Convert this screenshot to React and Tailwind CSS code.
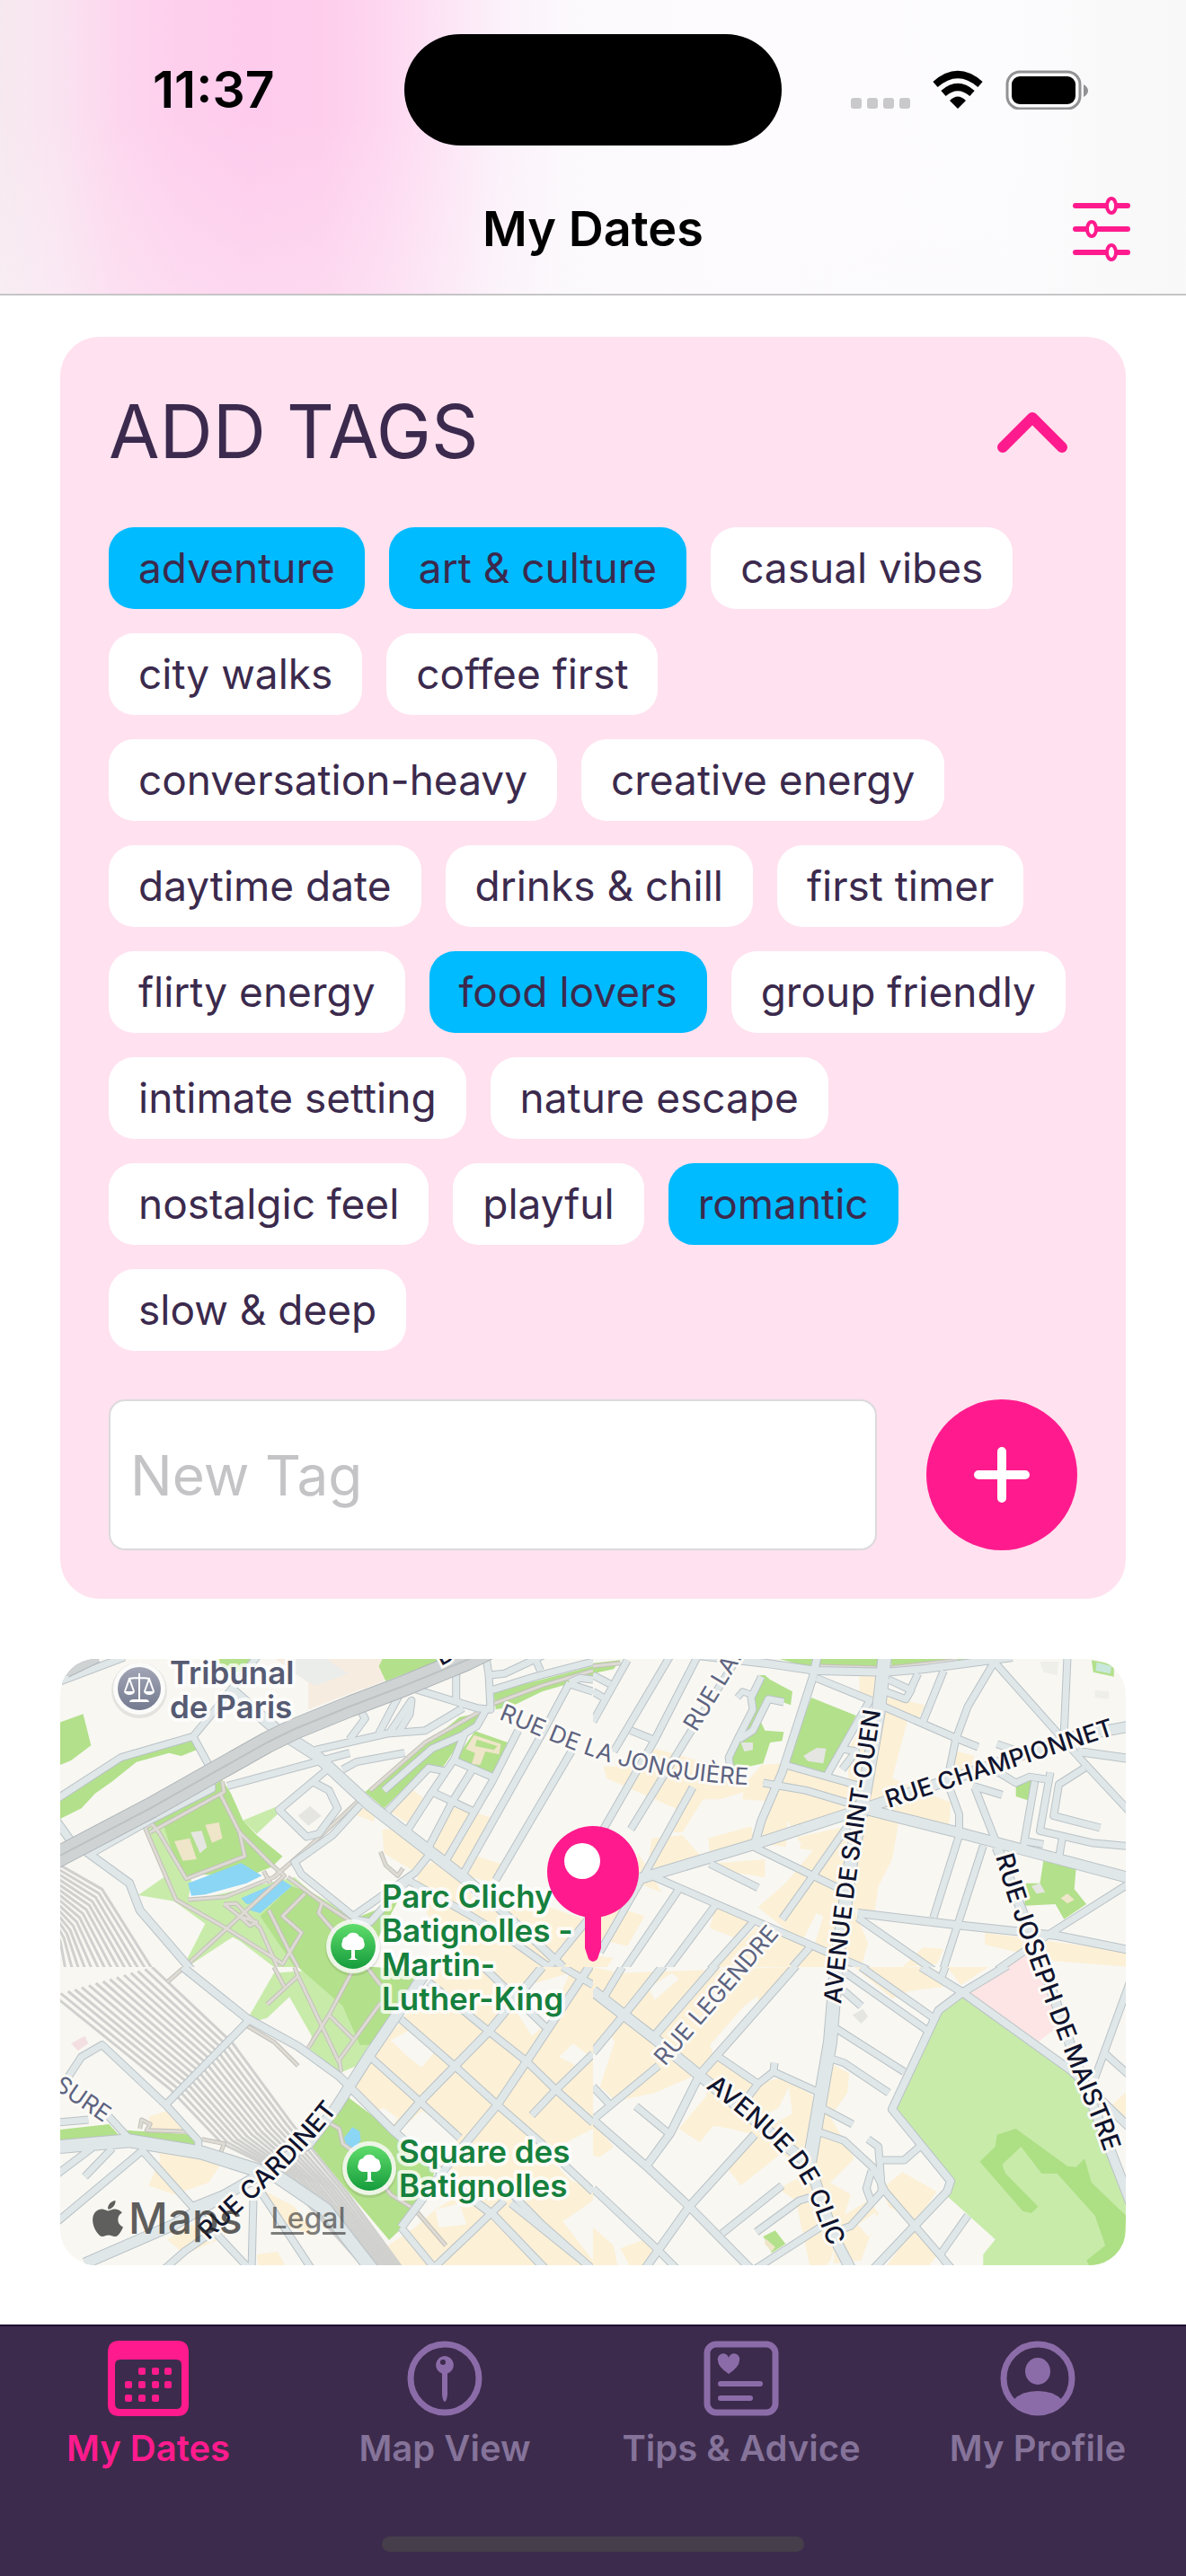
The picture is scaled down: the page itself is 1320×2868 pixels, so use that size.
import { useState } from "react";
import { FaApple } from "react-icons/fa";

const allTags = [
  "adventure",
  "art & culture",
  "casual vibes",
  "city walks",
  "coffee first",
  "conversation-heavy",
  "creative energy",
  "daytime date",
  "drinks & chill",
  "first timer",
  "flirty energy",
  "food lovers",
  "group friendly",
  "intimate setting",
  "nature escape",
  "nostalgic feel",
  "playful",
  "romantic",
  "slow & deep",
];

const YELLOW = "#fcf0d6";
const GREEN = "#b3e08b";
const LIGHT_GREEN = "#c8ebaa";
const WATER = "#8bd5f5";
const PAPER = "#f8f7f2";
const PINK = "#fce5e4";
const SAND = "#efe5c9";
const BUILDING = "#e5e6e2";

// The map is cut into four tiles, each with its own 1568x1050 grid.
// areas: [fill, points], roads: [width, points]
const tiles = [
  {
    x: -7,
    y: -7,
    areas: [
      ["#f6ece0", "620,0 970,0 960,95 830,150 740,190 740,100"],
      ["#ebedeb", "690,0 790,20 855,70 760,110 700,70"],
      [GREEN, "0,240 85,205 108,310 50,360 18,375 0,380"],
      [GREEN, "0,500 180,360 380,290 410,295 415,325 370,345 335,335 240,365 170,430 120,470 80,520 0,565"],
      [GREEN, "465,0 600,0 555,60 500,70"],
      [GREEN, "945,45 965,0 1180,0 965,95"],
      [GREEN, "1278,130 1400,95 1568,45 1568,80 1420,130 1330,180 1285,190"],
      [GREEN, "905,465 1000,380 1080,310 1180,215 1250,198 1230,250 1180,300 1130,385 1090,380 1040,430 960,520"],
      [GREEN, "1225,262 1320,300 1275,408 1168,355"],
      [SAND, "1222,275 1300,305 1295,340 1255,330 1240,375 1215,372 1225,335 1198,322"],
      [GREEN, "1230,290 1290,312 1280,325 1225,312"],
      [LIGHT_GREEN, "262,585 330,560 400,760 390,830 500,830 620,880 720,1050 690,1050 520,950 400,1040 380,1040 440,905 350,830 245,810 320,750"],
      [LIGHT_GREEN, "550,560 645,515 650,540 590,605"],
      [LIGHT_GREEN, "390,830 700,750 750,800 900,900 800,1050 640,1050"],
      [GREEN, "262,580 490,425 515,470 550,560 590,610 665,680 635,715 560,750 420,740 385,760 340,650 320,580"],
      [GREEN, "600,880 690,780 745,800 870,890 1000,830 940,960 870,1050 700,1050"],
      [SAND, "350,630 395,620 415,690 375,695"],
      [BUILDING, "398,600 430,595 445,650 425,670"],
      [SAND, "440,575 480,567 490,620 460,635"],
      [BUILDING, "710,545 745,512 778,545 740,578"],
      [WATER, "390,770 545,703 605,745 560,770 440,808 400,812"],
      [WATER, "545,820 665,760 692,780 600,870 570,860 590,835 560,840"],
      [YELLOW, "975,530 1040,455 1075,485 1030,570"],
      [YELLOW, "875,540 905,508 938,530 930,565"],
      [YELLOW, "955,590 1010,588 1090,680 1040,725 960,670"],
      [YELLOW, "1160,515 1210,530 1140,690 1090,650"],
      [YELLOW, "1215,530 1270,550 1190,740 1150,700"],
      [YELLOW, "1230,680 1300,705 1270,765 1195,745"],
      [YELLOW, "1060,730 1110,690 1190,755 1230,840 1440,850 1568,900 1568,1050 1200,1050 1100,900 1050,800"],
    ],
    rails: [
      [[18, 710], [140, 790], [285, 1055]],
      [[0, 930], [10, 980], [15, 1060]],
    ],
    paths: [
      "300,590 385,755 555,680 540,600 485,475",
      "280,600 495,465 490,430",
      "265,585 355,825 500,920 640,1020 665,1040 720,935 665,880 730,805",
      "265,585 285,572 305,600",
      "390,1040 670,745 635,710 540,600",
      "610,730 630,770",
      "495,840 540,880 590,900 570,912 540,880",
      "495,840 530,838 600,920 650,1050",
      "680,750 780,835 860,895",
      "780,835 770,870 830,950",
      "625,860 690,1010 710,1050",
      "390,825 500,815 640,750 740,650 890,490",
      "920,460 1080,300 1280,170 1420,110 1568,60",
      "950,665 965,710 1000,745 1015,720",
    ],
    roads: [
      [8, "20,95 205,15"],
      [8, "110,670 280,560 460,455 455,385 405,280 195,350 0,495"],
      [8, "405,280 470,190 600,0"],
      [8, "505,445 860,335"],
      [8, "840,390 880,365 1020,335"],
      [8, "760,325 970,270 1080,260 1190,185"],
      [8, "860,290 905,220 895,200"],
      [8, "945,270 1005,140"],
      [8, "975,270 1040,160 1035,205 1000,270"],
      [8, "1045,120 1230,185 1270,190 1265,75 1255,0"],
      [8, "1170,165 1170,30"],
      [8, "1270,75 1310,70 1440,0"],
      [8, "1400,20 1415,60"],
      [8, "1275,125 1400,80 1568,30"],
      [8, "1255,195 1230,245 1195,270 1165,355 1100,465 1030,590"],
      [8, "960,460 1100,320 1190,275"],
      [8, "970,530 1090,385 1135,395"],
      [8, "1165,360 1275,415"],
      [8, "1215,395 1160,495 1090,650"],
      [8, "1100,465 1220,530"],
      [8, "1350,260 1275,430 1140,695"],
      [8, "1500,100 1430,250 1190,740"],
      [8, "1510,320 1285,760"],
      [8, "1500,100 1530,85 1568,90"],
      [8, "1500,105 1568,130"],
      [8, "750,430 800,460 825,520 770,605 735,615 655,525 790,395"],
      [8, "890,510 810,610 700,700 720,740 870,880 1050,735 1095,670"],
      [8, "870,890 920,900 1030,760 1200,870 1330,960 1440,1050"],
      [9, "0,550 50,630 100,670 220,770 250,860 400,1060"],
      [9, "1240,800 1360,920 1480,1050"],
      [8, "1568,870 1440,1050"],
      [13, "520,130 650,260 760,340 920,510 1010,590 1190,750 1250,810"],
    ],
    highways: ["-10,695 280,520 450,410 620,300 700,255 860,180 1020,110 1200,25 1270,-15", "30,50 120,0"],
  },
  {
    x: 593,
    y: -7,
    areas: [
      [GREEN, "485,75 500,75 515,90 580,130 575,175 515,150 480,210 500,260 555,265 550,295 515,300 495,370 405,392 400,360 430,290 470,190 465,150"],
      [GREEN, "635,150 765,210 680,405 565,365"],
      [GREEN, "480,0 840,0 845,55 700,55 600,40"],
      [GREEN, "865,0 1150,0 1000,50 870,55"],
      [GREEN, "1230,440 1275,425 1270,495 1230,480"],
      [GREEN, "1310,695 1405,720 1400,790 1435,840 1370,890 1345,840 1255,845 1260,770 1300,770"],
      [GREEN, "1450,25 1515,40 1515,80 1455,65"],
      ["#c9e8dc", "1465,32 1508,45 1505,70 1462,60"],
      [GREEN, "0,35 80,25 60,55 0,70"],
      [BUILDING, "612,345 650,318 678,320 670,370 625,362"],
      [BUILDING, "430,300 465,300 465,325 440,330"],
      [BUILDING, "1275,780 1300,770 1315,800 1290,805"],
      [SAND, "1360,820 1380,805 1400,825 1380,838"],
      ["#efefea", "1300,30 1355,30 1350,75 1310,65"],
      ["#efefea", "1460,125 1500,130 1500,155 1460,150"],
      [YELLOW, "180,320 350,375 350,400 480,450 370,490 320,490 260,600 235,600 240,520 40,420 30,380 130,380"],
      [YELLOW, "490,375 560,370 750,450 745,515 435,490 440,440"],
      [YELLOW, "515,460 740,520 490,620"],
      [YELLOW, "775,75 830,80 825,160 775,145"],
      [YELLOW, "850,145 965,175 945,225 860,190"],
      [YELLOW, "815,180 915,225 870,420 1040,500 1035,585 850,530 890,560 870,690 830,780 820,860 760,860 740,330"],
      [YELLOW, "1060,330 1110,345 1090,400 1020,420"],
      [YELLOW, "740,580 760,860 800,970 780,1050 560,1050 620,980 480,850 560,770 640,660 500,640"],
      [PAPER, "565,560 605,640 590,700 560,670"],
      [PAPER, "650,870 670,880 640,990 610,960"],
      [YELLOW, "335,620 460,580 470,630 340,670"],
      [YELLOW, "170,620 260,610 330,700 160,720"],
      [YELLOW, "340,705 500,690 500,750 380,730"],
      [YELLOW, "130,670 170,740 200,800 130,770"],
      [YELLOW, "40,840 150,880 100,980 0,950 0,850"],
      [YELLOW, "355,850 480,900 430,960 340,920"],
      [YELLOW, "360,1050 480,910 620,980 560,1050"],
      [YELLOW, "0,1010 60,1020 40,1050 0,1050"],
      [YELLOW, "960,985 1020,990 1000,1040 900,1050"],
      [YELLOW, "1140,935 1568,1000 1568,1050 1340,1030 1140,975"],
      [PINK, "1190,1050 1270,995 1300,1010 1330,1050"],
    ],
    paths: ["660,45 850,52 1060,25", "0,45 80,35"],
    roads: [
      [9, "310,10 500,35 650,60 850,65 960,55 1220,15"],
      [8, "100,25 0,230"],
      [8, "225,10 60,330"],
      [8, "305,10 180,290 100,450 30,590"],
      [8, "110,260 175,290"],
      [8, "0,75 50,105"],
      [8, "0,130 30,150"],
      [8, "430,0 270,290 110,590"],
      [8, "290,450 150,740 20,1000"],
      [8, "250,790 90,1060"],
      [8, "355,845 215,1060"],
      [8, "465,900 340,1060"],
      [8, "630,985 580,1050"],
      [8, "180,750 460,890 620,970 800,1060"],
      [8, "340,705 480,785"],
      [8, "470,650 640,745 730,795"],
      [8, "740,580 640,745 550,890"],
      [8, "495,435 620,460 780,515"],
      [8, "560,375 790,450"],
      [9, "655,0 640,80 550,400 490,560 470,640"],
      [8, "650,85 810,160"],
      [8, "805,160 680,410"],
      [8, "720,320 765,330 725,390"],
      [8, "490,80 460,150 465,190 420,290 395,350 400,390"],
      [8, "425,290 465,260 510,155 555,165"],
      [7, "420,150 435,130 460,140"],
      [8, "845,180 1055,285 1120,315"],
      [8, "860,90 925,125 910,155 850,130"],
      [8, "945,70 925,120"],
      [8, "1020,60 960,230"],
      [8, "1165,35 1090,180 1055,290 1030,430 1065,540 1065,610 990,885"],
      [8, "1155,15 1360,280 1430,370 1568,540"],
      [8, "1380,10 1370,270 1360,280"],
      [8, "1175,305 1250,335"],
      [9, "1410,330 1568,355"],
      [8, "1430,385 1355,440 1340,545 1475,585"],
      [8, "1180,400 1230,435 1270,415 1330,425"],
      [8, "1330,400 1300,595 1450,635 1568,648"],
      [8, "1285,430 1250,660"],
      [8, "1365,620 1355,685"],
      [8, "1260,630 1310,640"],
      [8, "1105,445 1190,475"],
      [8, "1110,450 1175,640"],
      [9, "770,870 1060,910 1350,945 1568,995"],
      [8, "770,885 990,1060"],
      [8, "1135,645 1018,1060"],
      [8, "1568,765 1320,945 1175,1060"],
      [11, "1175,650 1250,870 1320,1060"],
      [12, "135,755 470,640 790,520 1100,400 1400,280 1568,245"],
      [12, "800,525 1060,600 1290,670 1568,755"],
      [15, "850,0 830,200 800,400 780,530 750,700 730,870 705,1060"],
    ],
  },
  {
    x: -7,
    y: 343,
    areas: [
      [YELLOW, "925,300 1010,180 1130,0 1568,0 1568,1050 990,1050 960,940 1050,870 1110,810 1180,760 1000,560 870,410"],
      [PAPER, "980,245 1050,200 1110,280 1070,335 1030,300"],
      [PAPER, "1470,300 1510,255 1550,290 1520,330"],
      [PAPER, "990,560 1070,480 1180,560 1150,640 1060,650"],
      [PAPER, "940,480 960,470 1000,505 985,530"],
      [PAPER, "1330,120 1380,60 1500,20 1440,180 1390,230"],
      [PAPER, "1110,810 1180,790 1200,860 1120,870"],
      [PAPER, "1430,620 1568,540 1568,740 1500,710"],
      [PAPER, "1480,850 1568,780 1568,980"],
      [YELLOW, "275,500 330,480 400,580 490,650 450,720 350,760 275,730 310,640"],
      [YELLOW, "330,910 400,860 500,900 380,960"],
      [YELLOW, "600,740 700,800 760,900 650,850"],
      [YELLOW, "590,960 650,950 700,1050 600,1050"],
      [LIGHT_GREEN, "640,20 870,0 950,60 990,120 880,330 830,355 740,270 750,230 685,100 620,170 590,180 570,160"],
      [GREEN, "710,0 930,0 1060,10 1010,120 940,260 890,260 840,130"],
      [GREEN, "850,430 1000,560 1110,660 1100,720 1005,880 975,912 750,605 800,520"],
      [GREEN, "0,545 160,525 200,575 0,583"],
      [GREEN, "210,545 410,560 410,600 215,570"],
      ["#f3dfe2", "50,255 90,230 100,255 70,280"],
      [WATER, "868,535 890,550 892,580 875,605 850,595 844,570"],
    ],
    rails: [
      [[285, 0], [520, 255], [690, 520], [850, 750], [1010, 1000]],
      [[0, 95], [340, 410], [490, 590], [650, 680], [900, 1000]],
    ],
    paths: [
      "640,0 670,65",
      "700,0 710,30 620,125",
      "710,30 830,320",
      "865,20 800,160 740,270",
      "800,160 870,240",
      "950,120 830,310 835,350",
      "910,0 950,60",
      "800,520 830,540 840,590 900,640 980,760 1050,810 1140,930",
      "560,195 640,250 710,330",
      "250,540 255,510 280,525 270,545 390,550",
      "430,575 495,590 485,620",
      "330,50 380,0",
    ],
    roads: [
      [9, "375,0 560,170 710,265 830,365 990,550 1110,670 1210,770 1280,830 1430,1010"],
      [8, "565,180 325,460"],
      [8, "0,440 80,300 140,260 325,460 420,580 420,610"],
      [8, "220,575 160,500"],
      [8, "0,520 100,510"],
      [8, "0,700 110,605"],
      [8, "90,700 170,605"],
      [8, "0,860 260,610"],
      [8, "255,610 480,900 570,1010"],
      [8, "590,730 750,1010"],
      [8, "575,720 400,800"],
      [8, "580,780 575,1010"],
      [8, "480,870 380,950 320,1010"],
      [9, "1420,0 1265,215 1065,450 990,550"],
      [9, "1568,-20 1375,315 1290,460 1160,640 1010,870"],
      [8, "1568,290 1460,410 1390,495"],
      [8, "1310,780 1210,890 1100,1010"],
      [8, "920,300 1065,450 1180,570"],
      [8, "1010,175 1165,330 1290,460 1420,590 1568,750"],
      [8, "1090,50 1265,215 1375,315 1460,410 1568,520"],
      [8, "1250,0 1430,200"],
      [8, "1480,0 1568,60"],
      [8, "1010,870 1110,1010"],
      [8, "1330,790 1568,1010"],
      [8, "1300,720 1420,860 1568,1010"],
      [12, "1080,20 920,290 820,470 740,590 590,700 350,860 90,990"],
      [15, "0,602 220,580 430,620 650,700 790,810 925,1010"],
    ],
  },
  {
    x: 593,
    y: 343,
    areas: [
      [YELLOW, "80,20 580,0 320,350 180,420 60,450 40,390 120,320 50,230 100,150 0,90 0,0"],
      [YELLOW, "0,70 90,160 0,285"],
      [YELLOW, "90,160 190,240 150,330 60,440 20,400 60,260"],
      [PAPER, "160,70 230,20 250,40 180,110"],
      [PAPER, "440,130 480,95 480,140 350,290 340,260"],
      [YELLOW, "320,340 360,310 470,390 550,370 640,430 640,620 590,660 550,620 430,730 390,670 470,560 400,540 350,530 310,585 250,540 330,430"],
      [PAPER, "570,400 580,490 500,540 490,500 540,470"],
      [YELLOW, "690,320 745,355 740,420 690,500 760,640 690,720 750,760 690,980 640,1050 590,780 540,740 620,690 650,560"],
      [YELLOW, "760,0 980,0 1060,60 920,80 870,105"],
      [YELLOW, "1030,0 1150,0 1070,60"],
      [YELLOW, "840,740 900,685 1000,750 940,850 860,800"],
      [YELLOW, "820,1050 930,880 1010,950 940,1050"],
      [YELLOW, "700,850 800,780 830,820 780,980 700,990"],
      [PAPER, "770,860 820,820 835,860 800,900"],
      [YELLOW, "0,520 60,600 20,635 0,630"],
      [YELLOW, "80,940 150,910 180,950 150,1050 130,1050"],
      [YELLOW, "0,870 60,930 80,1050 0,1050"],
      [YELLOW, "1510,460 1568,400 1568,520"],
      [PINK, "1090,80 1200,0 1310,0 1350,200 1295,250"],
      [LIGHT_GREEN, "1075,100 1400,365 1568,750 1568,1050 1135,1050 1135,960 1170,910 1030,765 1045,720 880,470 1000,150"],
      ["#addf84", "1125,650 1170,600 1175,560 1230,540 1380,665 1405,668 1430,640 1450,720 1550,830 1545,930 1470,1050 1435,980 1490,930 1460,830 1350,690 1305,690 1245,600 1190,660 1200,690 1295,800 1275,822 1250,815"],
      [GREEN, "495,900 530,880 560,925 520,955"],
      [SAND, "500,905 530,935 520,950 500,925"],
      [BUILDING, "755,160 785,140 800,165 780,190"],
    ],
    paths: [],
    roads: [
      [8, "85,0 35,95"],
      [9, "205,-5 90,160 0,285"],
      [9, "360,-10 175,235"],
      [9, "590,-5 310,360 225,555 155,665"],
      [8, "190,330 0,510"],
      [8, "0,400 50,460"],
      [9, "0,510 155,665 280,800 460,1010"],
      [8, "125,465 225,560"],
      [8, "0,740 185,940 245,1010"],
      [9, "470,560 280,800 150,1010"],
      [8, "365,300 480,390 420,480"],
      [8, "480,390 525,350 650,415"],
      [8, "525,350 528,320"],
      [8, "550,730 375,890"],
      [8, "630,770 600,780 475,885"],
      [8, "660,870 470,1010"],
      [8, "655,550 730,580 815,670 850,750 1045,1010"],
      [8, "810,680 795,740 810,785"],
      [8, "800,575 830,600 835,670 840,750 750,865 690,890"],
      [8, "840,645 905,645 950,600"],
      [8, "700,200 905,350"],
      [8, "690,305 730,320 860,420"],
      [8, "665,470 755,525"],
      [8, "730,15 970,210"],
      [8, "780,0 990,170"],
      [8, "730,80 780,130"],
      [9, "955,0 1075,85 1390,345 1568,545"],
      [9, "1205,-5 1075,85 1005,145 870,475 1040,715 1030,750 815,1010"],
      [8, "1090,830 1010,960 1040,1010"],
      [8, "1015,30 1025,0"],
      [8, "1568,30 1460,370"],
      [8, "1490,290 1568,370"],
      [11, "1310,-5 1400,300 1460,480 1568,800"],
      [12, "0,80 90,160 180,240 350,400 630,660 700,900 750,1010"],
      [15, "708,0 690,250 630,650"],
    ],
  },
];

const streets = [
  { name: "RUE CHAMPIONNET", d: "M922 166 L1190 79", style: "fill-[#10142e] text-[27px] font-medium" },
  { name: "AVENUE DE SAINT-OUEN", d: "M869 384 Q880 270 916 40", style: "fill-[#10142e] text-[27px] font-medium" },
  { name: "RUE DE LA JONQUIÈRE", d: "M488 67 C560 95 640 145 830 141", style: "fill-[#5d6380] text-[26px]" },
  { name: "RUE LAN", d: "M708 82 L770 -20", style: "fill-[#5d6380] text-[26px]" },
  { name: "RUE LEGENDRE", d: "M673 454 L840 261", style: "fill-[#5d6380] text-[26px]" },
  { name: "AVENUE DE CLIC", d: "M718 477 C780 525 820 560 835 600 S860 665 890 740", style: "fill-[#10142e] text-[28px] font-medium" },
  { name: "RUE JOSEPH DE MAISTRE", d: "M1041 220 C1060 290 1110 420 1135 480 S1170 560 1185 660", style: "fill-[#10142e] text-[28px] font-medium" },
  { name: "RUE CARDINET", d: "M165 648 C230 585 285 545 345 450", style: "fill-[#10142e] text-[28px] font-medium" },
  { name: "SURE", d: "M-8 478 L90 545", style: "fill-[#5d6380] text-[26px]" },
];

// spread a set of tracks between the two outer ones
const railTracks = ([upper, lower]) =>
  Array.from({ length: 15 }, (_, i) =>
    upper
      .map(([x, y], p) => {
        const t = i / 14;
        return `${Math.round(x + (lower[p][0] - x) * t)},${Math.round(y + (lower[p][1] - y) * t)}`;
      })
      .join(" "),
  );

const Line = ({ points, color, width }) => (
  <polyline
    points={points}
    fill="none"
    stroke={color}
    strokeWidth={width}
    strokeLinejoin="round"
    vectorEffect="non-scaling-stroke"
  />
);

const MapTile = ({ tile }) => (
  <svg x={tile.x} y={tile.y} width="600" height="350" viewBox="0 0 1568 1050" preserveAspectRatio="none">
    {tile.areas.map(([fill, points]) => (
      <polygon key={points} points={points} fill={fill} />
    ))}
    {tile.rails &&
      railTracks(tile.rails).map((points) => <Line key={points} points={points} color="#d0d0ce" width={3} />)}
    {tile.paths.map((points) => (
      <Line key={points} points={points} color="#c3c0ba" width={5} />
    ))}
    {tile.paths.map((points) => (
      <Line key={points} points={points} color="#dedbd4" width={3} />
    ))}
    {tile.roads.map(([width, points]) => (
      <Line key={points} points={points} color="#b9c2c6" width={width + 1} />
    ))}
    {tile.roads.map(([width, points]) => (
      <Line key={points} points={points} color="#e0e7e9" width={width - 1} />
    ))}
    {tile.highways?.map((points) => (
      <g key={points}>
        <Line points={points} color="#aeb4b7" width={24} />
        <Line points={points} color="#cfd3d4" width={22} />
        <Line points={points} color="#bcc1c3" width={2} />
      </g>
    ))}
  </svg>
);

const PlaceLabel = ({ x, y, lines, className }) => (
  <text
    className={`text-[35px] font-semibold ${className}`}
    stroke="#ffffff"
    strokeOpacity="0.75"
    strokeWidth="8"
    strokeLinejoin="round"
    paintOrder="stroke"
  >
    {lines.map((line, i) => (
      <tspan key={line} x={x} y={y + i * 38}>
        {line}
      </tspan>
    ))}
  </text>
);

const TreeBadge = ({ x, y }) => (
  <g transform={`translate(${x} ${y})`}>
    <circle r="31" cy="2" fill="#000000" opacity="0.08" />
    <circle r="30" fill="#ffffff" opacity="0.8" />
    <circle r="25" fill="url(#treeFill)" />
    <path
      d="M-2 2h4v10q0 2 4 3h-12q4-1 4-3zM-7 4a6 6 0 0 1-5-9a6 6 0 0 1 5-6a8 8 0 0 1 14 0a6 6 0 0 1 5 6a6 6 0 0 1-5 9z"
      fill="#ffffff"
    />
  </g>
);

const DateMap = () => (
  <section aria-label="Date location" className="relative overflow-hidden rounded-[40px] bg-[#f8f7f2]">
    <svg viewBox="0 0 1186 675" className="block w-full">
      <defs>
        <linearGradient id="treeFill" x1="0" y1="0" x2="0" y2="1">
          <stop offset="0" stopColor="#5fdc6b" />
          <stop offset="1" stopColor="#159c3c" />
        </linearGradient>
        <linearGradient id="courtFill" x1="0" y1="0" x2="0" y2="1">
          <stop offset="0" stopColor="#a1a5b5" />
          <stop offset="1" stopColor="#747a90" />
        </linearGradient>
      </defs>
      {tiles.map((tile) => (
        <MapTile key={`${tile.x},${tile.y}`} tile={tile} />
      ))}
      {streets.map((street, i) => (
        <g key={street.name}>
          <path id={`street-${i}`} d={street.d} fill="none" />
          <text
            className={street.style}
            stroke="#fbfaf6"
            strokeWidth="6"
            strokeLinejoin="round"
            paintOrder="stroke"
          >
            <textPath href={`#street-${i}`}>{street.name}</textPath>
          </text>
        </g>
      ))}
      <text
        x="424"
        y="8"
        className="fill-[#10142e] text-[26px] font-medium"
        stroke="#fbfaf6"
        strokeWidth="6"
        paintOrder="stroke"
        transform="rotate(-28 424 8)"
      >
        B
      </text>

      <g transform="translate(88 33)">
        <circle r="31" cy="2" fill="#000000" opacity="0.08" />
        <circle r="29" fill="#ffffff" opacity="0.85" />
        <circle r="24" fill="url(#courtFill)" />
        <path
          d="M0-17V13M-12-11Q0-13 12-11M-11-11L-16 3M-11-11L-6 3M11-11L6 3M11-11L16 3"
          fill="none"
          stroke="#ffffff"
          strokeWidth="2"
        />
        <path d="M-17 3h12a6 4 0 0 1-12 0zM5 3h12a6 4 0 0 1-12 0zM-11 15q0-3 5-3h12q5 0 5 3z" fill="#ffffff" />
      </g>
      <PlaceLabel x={122} y={28} lines={["Tribunal", "de Paris"]} className="fill-[#565b73]" />
      <TreeBadge x={326} y={320} />
      <PlaceLabel
        x={358}
        y={277}
        lines={["Parc Clichy", "Batignolles -", "Martin-", "Luther-King"]}
        className="fill-[#16803d]"
      />
      <TreeBadge x={344} y={567} />
      <PlaceLabel x={377} y={561} lines={["Square des", "Batignolles"]} className="fill-[#16803d]" />

      <path d="M584 270H602V322L598 334Q593 340 588 334L584 322Z" fill="#ff1b8d" />
      <circle cx="593" cy="237" r="51" fill="#ff1b8d" />
      <circle cx="581" cy="225" r="20" fill="#ffffff" />
    </svg>
    <div className="absolute bottom-[22px] left-[30px] flex items-center text-[#2c2c2c]/75">
      <FaApple className="size-[46px]" />
      <span className="text-5xl leading-[60px] font-medium">Maps</span>
      <a href="#legal" className="ml-8 text-[32px] font-medium text-[#2c2c2c]/60 underline underline-offset-4">
        Legal
      </a>
    </div>
  </section>
);

const StatusBar = () => (
  <div className="relative flex h-[124px] items-center justify-between pr-[107px] pl-[170px]">
    <span className="text-[57px] leading-[60px] font-semibold">11:37</span>
    <div className="absolute left-1/2 h-[124px] w-[420px] -translate-x-1/2 rounded-full bg-black"></div>
    <div className="flex items-center gap-6">
      <svg viewBox="0 0 66 44" className="h-11 w-[66px] fill-[#c9c9cb]">
        <rect x="0" y="31" width="12" height="12" rx="3" />
        <rect x="18" y="31" width="12" height="12" rx="3" />
        <rect x="36" y="31" width="12" height="12" rx="3" />
        <rect x="54" y="31" width="12" height="12" rx="3" />
      </svg>
      <svg viewBox="0 0 58 44" className="h-11 w-[58px]">
        <path d="M29 43L20 34Q29 25 38 34Z" />
        <path d="M4 16Q29-6 54 16" fill="none" stroke="#000000" strokeWidth="8" />
        <path d="M13 26Q29 12 45 26" fill="none" stroke="#000000" strokeWidth="8" />
      </svg>
      <svg viewBox="0 0 94 44" className="h-11 w-[94px]">
        <rect x="2" y="2" width="81" height="41" rx="14" fill="none" stroke="#929193" strokeWidth="3" />
        <rect x="7" y="7" width="71" height="31" rx="9" />
        <path d="M87 16q5 3 5 7t-5 7z" fill="#929193" />
      </svg>
    </div>
  </div>
);

const tabs = [
  {
    name: "My Dates",
    icon: (
      <svg viewBox="0 0 90 84" className="h-[84px] w-[90px]">
        <path
          fillRule="evenodd"
          fill="currentColor"
          d="M13 0H77Q90 0 90 13V71Q90 84 77 84H13Q0 84 0 71V13Q0 0 13 0ZM14 21Q8 21 8 27V70Q8 76 14 76H76Q82 76 82 70V27Q82 21 76 21Z"
        />
        {[
          [38, 34], [53, 34], [67, 34],
          [23, 49], [38, 49], [53, 49], [67, 49],
          [23, 64], [38, 64], [53, 64],
        ].map(([x, y]) => (
          <rect key={`${x},${y}`} x={x - 4} y={y - 4} width="8" height="8" rx="2" fill="currentColor" />
        ))}
      </svg>
    ),
  },
  {
    name: "Map View",
    icon: (
      <svg viewBox="0 0 84 84" className="size-[84px]">
        <circle cx="42" cy="42" r="38" fill="none" stroke="currentColor" strokeWidth="7" />
        <path
          fillRule="evenodd"
          fill="currentColor"
          d="M42 17a10 10 0 0 1 3 19.500V60q-1 8-3 8t-3-8V36.500a10 10 0 0 1 3-19.500zM40 21a3 3 0 1 0 0 6a3 3 0 1 0 0-6z"
        />
      </svg>
    ),
  },
  {
    name: "Tips & Advice",
    icon: (
      <svg viewBox="0 0 84 84" className="size-[84px]">
        <rect x="4" y="4" width="76" height="76" rx="10" fill="none" stroke="currentColor" strokeWidth="7" />
        <path d="M28 37Q16 29 16 22A6 6 0 0 1 28 19A6 6 0 0 1 40 22Q40 29 28 37Z" fill="currentColor" />
        <path d="M19 48H63M19 64H52" stroke="currentColor" strokeWidth="6" strokeLinecap="round" />
      </svg>
    ),
  },
  {
    name: "My Profile",
    icon: (
      <svg viewBox="0 0 84 84" className="size-[84px]">
        <circle cx="42" cy="42" r="38" fill="none" stroke="currentColor" strokeWidth="7" />
        <ellipse cx="42" cy="34" rx="14" ry="15" fill="currentColor" />
        <path d="M15 66Q24 56 42 56T69 66Q58 80 42 80T15 66Z" fill="currentColor" />
      </svg>
    ),
  },
];

const App = () => {
  const [selected, setSelected] = useState(["adventure", "art & culture", "food lovers", "romantic"]);
  const [newTag, setNewTag] = useState("");
  const [open, setOpen] = useState(true);
  const [activeTab, setActiveTab] = useState("My Dates");

  const toggleTag = (tag) => {
    setSelected(selected.includes(tag) ? selected.filter((t) => t !== tag) : [...selected, tag]);
  };

  const submitHandler = (e) => {
    e.preventDefault();
    setNewTag("");
  };

  return (
    <div className="flex min-h-screen flex-col bg-white font-['Inter',sans-serif]">
      <header className="border-b-2 border-[#c6c5c7] bg-[linear-gradient(180deg,#faf9fa00_40%,#faf9fa44_100%),linear-gradient(90deg,#f7e9f0_0%,#fae3f1_5%,#fdd6ee_10%,#fecfed_15%,#fecbec_21%,#fecdec_27%,#fed6f0_32%,#fde3f5_37%,#fcf1fa_42%,#fcf9fd_48%,#fdfbfe_60%,#fcfbfd_85%,#f8f8f8_100%)] pt-[38px]">
        <StatusBar />
        <div className="grid h-[165px] grid-cols-[1fr_auto_1fr] items-center px-[61px]">
          <span></span>
          <h1 className="pt-5 text-[54px] leading-[64px] font-semibold">My Dates</h1>
          <button aria-label="Filters" className="mt-5 justify-self-end text-[#ff1b8d]">
            <svg viewBox="0 0 66 74" className="h-[74px] w-[66px]">
              <path d="M4 11H62M4 37H62M4 63H62" stroke="currentColor" strokeWidth="6" strokeLinecap="round" />
              <g fill="#ffffff" stroke="currentColor" strokeWidth="4">
                <ellipse cx="44" cy="11" rx="5" ry="8" />
                <ellipse cx="22" cy="37" rx="5" ry="8" />
                <ellipse cx="44" cy="63" rx="5" ry="8" />
              </g>
            </svg>
          </button>
        </div>
      </header>

      <main className="flex grow flex-col gap-[67px] px-[67px] pt-[46px] pb-[66px]">
        <section className="rounded-[44px] bg-[#ffe1ef] p-[54px] text-[#3b2a4d]">
          <div className="flex h-[104px] items-center justify-between">
            <h2 className="text-[82px] leading-[104px]">ADD TAGS</h2>
            <button
              aria-label="Toggle tags"
              aria-expanded={open}
              onClick={() => setOpen(!open)}
              className="mr-[10px] text-[#ff1b8d]"
            >
              <svg viewBox="0 0 80 48" className="h-12 w-20">
                <path
                  d="M7 41L40 8L73 41"
                  fill="none"
                  stroke="currentColor"
                  strokeWidth="12"
                  strokeLinecap="round"
                  strokeLinejoin="round"
                />
              </svg>
            </button>
          </div>

          {open && (
            <>
              <div className="mt-[54px] flex flex-wrap gap-[27px]">
                {allTags.map((tag) => (
                  <button
                    key={tag}
                    aria-pressed={selected.includes(tag)}
                    onClick={() => toggleTag(tag)}
                    className={`h-[91px] rounded-[28px] px-[33px] pb-[2px] text-[46px] leading-[60px] ${
                      selected.includes(tag) ? "bg-[#00bbff]" : "bg-white"
                    }`}
                  >
                    {tag}
                  </button>
                ))}
              </div>
              <form onSubmit={submitHandler} className="mt-[54px] flex items-center gap-[55px]">
                <input
                  type="text"
                  aria-label="New Tag"
                  placeholder="New Tag"
                  value={newTag}
                  onChange={(e) => setNewTag(e.target.value)}
                  className="h-[168px] min-w-0 grow rounded-[18px] border-2 border-[#dcdadc] bg-white px-[22px] text-[62px] placeholder:text-[#c4c4c6]"
                />
                <button
                  type="submit"
                  aria-label="Add tag"
                  className="flex size-[168px] shrink-0 items-center justify-center rounded-full bg-[#ff1b8d]"
                >
                  <svg viewBox="0 0 62 62" className="size-[62px]">
                    <path d="M31 5V57M5 31H57" stroke="#ffffff" strokeWidth="10" strokeLinecap="round" />
                  </svg>
                </button>
              </form>
            </>
          )}
        </section>

        <DateMap />
      </main>

      <nav className="border-t-2 border-[#1d0a30] bg-[#3c2b4c] pb-[27px]">
        <div className="grid grid-cols-4 pt-4">
          {tabs.map((tab) => (
            <button
              key={tab.name}
              aria-current={activeTab === tab.name ? "page" : undefined}
              onClick={() => setActiveTab(tab.name)}
              className={`flex flex-col items-center gap-2 ${
                activeTab === tab.name ? "text-[#ff1b8d]" : "text-[#8b6ca8]"
              }`}
            >
              {tab.icon}
              <span
                className={`text-[40px] leading-[56px] font-semibold ${
                  activeTab === tab.name ? "text-[#ff1b8d]" : "text-[#85739a]"
                }`}
              >
                {tab.name}
              </span>
            </button>
          ))}
        </div>
        <div className="mx-auto mt-[70px] h-[17px] w-[470px] rounded-full bg-[#463e4a]"></div>
      </nav>
    </div>
  );
};

export default App;
